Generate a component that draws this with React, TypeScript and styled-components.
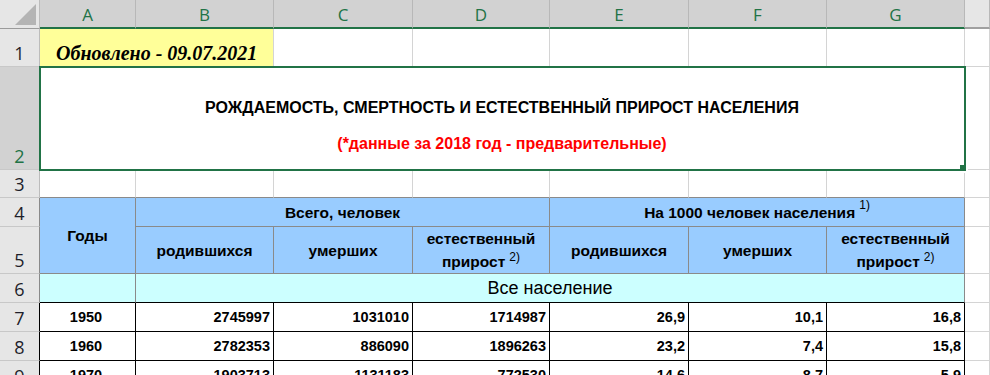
import React from "react";
import styled, { createGlobalStyle } from "styled-components";

const GRID = "#d4d4d4";
const HEAD_LINE = "#8a8a8a";
const GREEN = "#217346";

const GlobalStyle = createGlobalStyle`
  body {
    margin: 0;
    background: #fff;
    overflow: hidden;
    font-family: "Liberation Sans", Arial, sans-serif;
  }
`;

const Sheet = styled.div`
  display: grid;
  width: 990px;
  grid-template-columns: 40px 96px 138px 139px 137px 139px 138px 138px 1fr;
  grid-template-rows: 29px 38px 103px 28px 29px 47px 29px 29px 29px 29px;
`;

const Corner = styled.div`
  position: relative;
  box-sizing: border-box;
  background: #e6e6e6;
  border-right: 1px solid #bcbcbc;
  border-bottom: 1px solid #9b9b9b;

  &::after {
    content: "";
    position: absolute;
    right: 3px;
    bottom: 3px;
    width: 0;
    height: 0;
    border-left: 21px solid transparent;
    border-bottom: 21px solid #b4b4b4;
  }
`;

const ColHead = styled.div<{ $active?: boolean }>`
  box-sizing: border-box;
  display: flex;
  align-items: center;
  justify-content: center;
  padding-top: 2px;
  background: ${(p) => (p.$active ? "#d2d2d2" : "#e6e6e6")};
  color: ${(p) => (p.$active ? GREEN : "#222")};
  border-right: 1px solid #b8b8b8;
  border-bottom: 2px solid ${(p) => (p.$active ? GREEN : "#a0a0a0")};
  font-family: "Open Sans", sans-serif;
  font-size: 17px;
`;

const RowHead = styled.div<{ $active?: boolean; $edge?: string }>`
  box-sizing: border-box;
  display: flex;
  align-items: flex-end;
  justify-content: center;
  padding-bottom: 4px;
  background: ${(p) => (p.$active ? "#d2d2d2" : "#e6e6e6")};
  color: ${(p) => (p.$active ? GREEN : "#1e1e2a")};
  border-right: 1px solid ${(p) => p.$edge ?? "#bcbcbc"};
  border-bottom: 1px solid #c8c8c8;
  font-family: "Open Sans", sans-serif;
  font-size: 18px;
  line-height: 18px;
`;

const Cell = styled.div<{
  $span?: number;
  $rows?: number;
  $bg?: string;
  $r?: string;
  $b?: string;
  $justify?: string;
}>`
  box-sizing: border-box;
  min-width: 0;
  grid-column: span ${(p) => p.$span ?? 1};
  grid-row: span ${(p) => p.$rows ?? 1};
  display: flex;
  align-items: center;
  justify-content: ${(p) => p.$justify ?? "center"};
  background: ${(p) => p.$bg ?? "#fff"};
  border-right: 1px solid ${(p) => p.$r ?? GRID};
  border-bottom: 1px solid ${(p) => p.$b ?? GRID};
  white-space: nowrap;
  overflow: hidden;
`;

const Updated = styled(Cell)`
  align-items: flex-end;
  justify-content: flex-start;
  padding: 0 0 3px 16px;
  background: #ffff99;
  font-family: "Liberation Serif", "Times New Roman", serif;
  font-weight: bold;
  font-style: italic;
  font-size: 20px;
  line-height: 20px;
`;

const TitleCell = styled(Cell)`
  position: relative;
  overflow: visible;
  flex-direction: column;
  justify-content: flex-end;
  padding-bottom: 16px;
  font-weight: bold;
  font-size: 16px;
  line-height: 18px;

  &::before {
    content: "";
    position: absolute;
    left: -1px;
    top: -1px;
    right: -2px;
    bottom: -2px;
    border: 2px solid ${GREEN};
    pointer-events: none;
  }

  &::after {
    content: "";
    position: absolute;
    right: -2px;
    bottom: -2px;
    width: 6px;
    height: 6px;
    background: ${GREEN};
    box-shadow: 1px 1px 0 1px #fff;
  }
`;

const Title = styled.div`
  color: #000;
`;

const Note = styled.div`
  margin-top: 18px;
  color: #ff0000;
`;

const HeadCell = styled(Cell)`
  text-align: center;
  font-weight: bold;
  font-size: 15.5px;
  line-height: 23px;
  color: #000;
`;

const Band = styled(Cell)`
  font-size: 18px;
  color: #000;
`;

const DataCell = styled(Cell)`
  padding-right: 3px;
  font-weight: bold;
  font-size: 14.5px;
  color: #000;
`;

const Sup = styled.span<{ $raise?: number }>`
  position: relative;
  top: -${(p) => p.$raise ?? 6}px;
  margin-left: 4px;
  font-weight: normal;
  font-size: 12px;
  line-height: 0;
`;

const columns = ["A", "B", "C", "D", "E", "F", "G"];

const data = [
  { n: 7, year: "1950", v: ["2745997", "1031010", "1714987", "26,9", "10,1", "16,8"] },
  { n: 8, year: "1960", v: ["2782353", "886090", "1896263", "23,2", "7,4", "15,8"] },
  { n: 9, year: "1970", v: ["1903713", "1131183", "772530", "14,6", "8,7", "5,9"] },
];

const App = (): JSX.Element => {
  return (
    <>
      <GlobalStyle />
      <Sheet>
        <Corner />
        {columns.map((c) => (
          <ColHead key={c} $active>
            {c}
          </ColHead>
        ))}
        <ColHead />

        {/* row 1 */}
        <RowHead>1</RowHead>
        <Updated $span={2}>Обновлено - 09.07.2021</Updated>
        {columns.slice(2).map((c) => (
          <Cell key={c} />
        ))}
        <Cell />

        {/* row 2 */}
        <RowHead $active>2</RowHead>
        <TitleCell $span={7}>
          <Title>РОЖДАЕМОСТЬ, СМЕРТНОСТЬ И ЕСТЕСТВЕННЫЙ ПРИРОСТ НАСЕЛЕНИЯ</Title>
          <Note>(*данные за 2018 год - предварительные)</Note>
        </TitleCell>
        <Cell />

        {/* row 3 */}
        <RowHead>3</RowHead>
        {columns.map((c) => (
          <Cell key={c} $b={HEAD_LINE} />
        ))}
        <Cell />

        {/* rows 4-5: table header */}
        <RowHead $edge={HEAD_LINE}>4</RowHead>
        <HeadCell $rows={2} $bg="#99ccff" $r={HEAD_LINE} $b={HEAD_LINE}>
          Годы
        </HeadCell>
        <HeadCell $span={3} $bg="#99ccff" $r={HEAD_LINE} $b={HEAD_LINE}>
          Всего, человек
        </HeadCell>
        <HeadCell $span={3} $bg="#99ccff" $r={HEAD_LINE} $b={HEAD_LINE}>
          <span>
            На 1000 человек населения<Sup $raise={9}>1)</Sup>
          </span>
        </HeadCell>
        <Cell />

        <RowHead $edge={HEAD_LINE}>5</RowHead>
        {[0, 1].map((g) => (
          <React.Fragment key={g}>
            <HeadCell $bg="#99ccff" $r={HEAD_LINE} $b={HEAD_LINE}>
              родившихся
            </HeadCell>
            <HeadCell $bg="#99ccff" $r={HEAD_LINE} $b={HEAD_LINE}>
              умерших
            </HeadCell>
            <HeadCell $bg="#99ccff" $r={HEAD_LINE} $b={HEAD_LINE}>
              <span>
                естественный
                <br />
                прирост<Sup>2)</Sup>
              </span>
            </HeadCell>
          </React.Fragment>
        ))}
        <Cell />

        {/* row 6 */}
        <RowHead $edge={HEAD_LINE}>6</RowHead>
        <Band $bg="#ccffff" $r={HEAD_LINE} $b="#000" />
        <Band $span={6} $bg="#ccffff" $r={HEAD_LINE} $b="#000">
          Все население
        </Band>
        <Cell />

        {/* data rows */}
        {data.map((row) => (
          <React.Fragment key={row.n}>
            <RowHead $edge="#000">{row.n}</RowHead>
            <DataCell $r="#000" $b="#000">
              {row.year}
            </DataCell>
            {row.v.map((v, i) => (
              <DataCell key={i} $r="#000" $b="#000" $justify="flex-end">
                {v}
              </DataCell>
            ))}
            <Cell />
          </React.Fragment>
        ))}
      </Sheet>
    </>
  );
};

export default App;
